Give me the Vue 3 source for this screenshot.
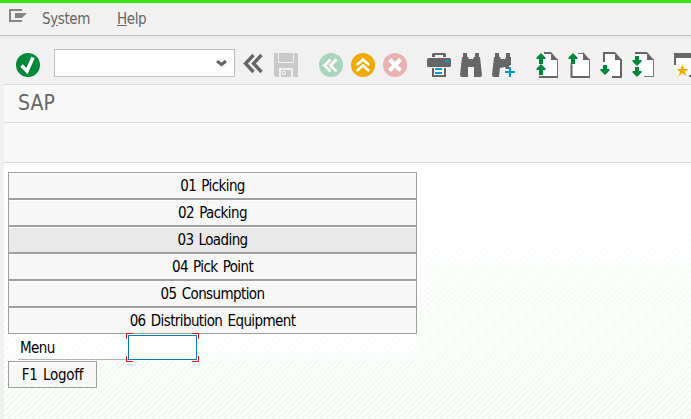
<script setup>
const items = ['01 Picking', '02 Packing', '03 Loading', '04 Pick Point', '05 Consumption', '06 Distribution Equipment']
const pages = [
  { id: 'first', direction: 'up', arrows: [1, 12], heavy: 'M8 1h7M3 25h19', light: 'M21.500 7v17' },
  { id: 'previous', direction: 'up', arrows: [1], heavy: 'M3.500 11v14H22', light: 'M10 1.500h5M21.500 7v17' },
  { id: 'next', direction: 'down', arrows: [13], heavy: 'M4 10V1h11M12 25h9V7', light: '' },
  { id: 'last', direction: 'down', arrows: [4, 15], heavy: 'M3 1h12', light: 'M12 24.500h9.500V7' }
]
const arrowPath = {
  up: 'M4.500 0 9 4.500V6H6.500v5h-4V6H0V4.500z',
  down: 'M2.500 0h4v4H9v1.500L4.500 10 0 5.500V4h2.500z'
}
</script>

<template>
  <div class="window">
    <nav class="menubar">
      <svg class="exit" width="18" height="14" viewBox="0 0 18 14">
        <path d="M12 2V1H1v11h11v-1" fill="none" stroke="#858585" stroke-width="2" />
        <path d="M6 4h12l-5 5H6z" fill="#858585" />
      </svg>
      <span class="system">S<u>y</u>stem</span>
      <span class="help"><u>H</u>elp</span>
    </nav>
    <div class="shell">
      <div class="toolbar">
        <svg class="icon check" viewBox="0 0 24 24">
          <circle cx="12" cy="12" r="12" fill="#00883a" />
          <path d="M5.500 12.500 11 18 17 4.500" fill="none" stroke="#fff" stroke-width="3.600" />
        </svg>
        <div class="combo">
          <svg width="11" height="7" viewBox="0 0 11 7"><path d="M1 1 5.500 4.500 10 1" fill="none" stroke="#666" stroke-width="3" /></svg>
        </div>
        <svg class="icon back" viewBox="0 0 24 24">
          <path d="M10.500 2 2.500 10.500l8 8.500M18.500 2l-8 8.500 8 8.500" fill="none" stroke="#666" stroke-width="3.300" />
        </svg>
        <svg class="icon save" viewBox="0 0 24 24">
          <path d="M0 0h4v10h16V0h4v24h-5v-9H5v9H2l-2-2z" fill="#c9c9c9" />
          <path d="M5 0h14v9H5zM7 17h10v7H7z" fill="#c9c9c9" />
          <path d="M11 18.500H8.500v3H11z" fill="none" stroke="#f1f1f1" />
        </svg>
        <svg class="icon prev" viewBox="0 0 24 24">
          <circle cx="12" cy="12" r="12" fill="#a9d5bc" />
          <path d="m11.500 6.500-6 6 6 6M17.500 6.500l-6 6 6 6" fill="none" stroke="#fff" stroke-width="2.800" />
        </svg>
        <svg class="icon" viewBox="0 0 24 24">
          <circle cx="12" cy="12" r="12" fill="#f0ab00" />
          <path d="m5.800 12 6.200-5.500 6.200 5.500M5.800 18l6.200-5.500 6.200 5.500" fill="none" stroke="#fff" stroke-width="2.600" />
        </svg>
        <svg class="icon" viewBox="0 0 24 24">
          <circle cx="12" cy="12" r="12" fill="#ebb1b1" />
          <path d="m6.500 6.500 11 11m0-11-11 11" stroke="#fff" stroke-width="4" />
        </svg>
        <svg class="icon print" viewBox="0 0 24 24">
          <path d="M5 4V1l1-1h12l1 1v3h-3V2H8v2z" fill="#666" />
          <rect y="5" width="24" height="9" rx="1.500" fill="#666" />
          <path d="M5 15h14v9H5z" fill="#666" /><path d="M7 14h10v8H7z" fill="#fff" />
          <path d="M18 7h4v2h-4zM8 15h7v2H8zM8 19h7v2H8z" fill="#009de0" />
        </svg>
        <svg class="icon" viewBox="0 0 24 24">
          <path d="M4 0h4v4h1.500v2h5V4H16V0h4v4h1l2 18-1 2h-7v-10H9v10H2l-1-2L3 4h1z" fill="#666" />
        </svg>
        <svg class="icon" viewBox="0 0 24 24">
          <path d="M4 0h4v4h1.500v2h5V4H15V0h4v4h1v8l-2 1v3h-3l-1-2-5 1-1 9H2l-1-2L3 4h1z" fill="#666" />
          <path d="M14 19h10M19 14v10" stroke="#009de0" stroke-width="2" />
        </svg>
        <svg v-for="page in pages" :key="page.id" class="icon page" :class="page.id" viewBox="0 0 24 26">
          <path d="M4 1h11l6.500 6.500V25H4z" fill="#fff" />
          <path :d="page.heavy" fill="none" stroke="#666" stroke-width="2" />
          <path :d="page.light" fill="none" stroke="#777" />
          <path d="M15 0v8h7z" fill="#666" />
          <path v-for="y in page.arrows" :key="y" :transform="`translate(.5 ${y})`" :d="arrowPath[page.direction]" fill="#00883a" stroke="#f6f6f6" stroke-width=".6" paint-order="stroke" />
        </svg>
        <svg class="icon session" viewBox="0 0 24 24">
          <path d="M0 0h24v24H15v-2h7V5H2v7H0z" fill="#666" /><path d="M2 5h20v17H2z" fill="#fafafa" />
          <path d="m8.500 11.500 1.700 4.500h4.300L11 18.700l1.500 4.300-4-2.700-4 2.700L6 18.700 2.500 16h4.300z" fill="#f0ab00" />
        </svg>
      </div>
      <header class="title">SAP</header>
      <div class="appbar"></div>
      <main class="canvas">
        <div class="menu">
          <button v-for="(item, i) in items" :key="item" :class="{ active: i === 2 }">{{ item }}</button>
        </div>
        <div class="field">
          <label>Menu</label>
          <div class="entry">
            <svg width="73" height="29" viewBox="0 0 73 29">
              <path d="M7 .5H.5V6M66 .5h6.500V6M7 28.500H.5V23M66 28.500h6.500V23" fill="none" stroke="#d91515" />
            </svg>
          </div>
        </div>
        <button class="logoff">F1 Logoff</button>
      </main>
    </div>
  </div>
</template>

<style>
body { margin: 0; overflow: hidden; }
</style>

<style scoped>
* { box-sizing: border-box; }
.window { width: 691px; height: 419px; overflow: hidden; display: flex; flex-direction: column; background: #f1f1f1; border-top: 3px solid #37e600; font: 15px/20px "DejaVu Sans Condensed", "DejaVu Sans", sans-serif; letter-spacing: -.6px; word-spacing: 1.5px; color: #000; }
.menubar { height: 33px; flex: none; display: flex; align-items: flex-start; padding: 6px 0 0 9px; border-bottom: 1px solid #c4c4c4; color: #666; letter-spacing: -.4px; }
.exit { flex: none; }
.system { margin-left: 15px; width: 75px; }
.shell { flex: 1; min-height: 0; display: flex; flex-direction: column; padding-left: 4px; border-top: 3px solid #eaeaea; }
.toolbar { height: 46px; flex: none; display: flex; align-items: flex-start; gap: 8px; padding: 14px 0 0 12px; border-bottom: 1px solid #d9d9d9; overflow: hidden; }
.icon { width: 24px; height: 24px; flex: none; overflow: visible; }
.combo { width: 181px; height: 28px; flex: none; margin: -4px 0 0 6px; border: 1px solid #bfbfbf; background: #fff; display: flex; justify-content: flex-end; padding: 10px 7px 0 0; }
.save { margin-left: -1px; }
.prev { margin-left: 13px; }
.print { margin-left: 12px; }
.page { height: 26px; margin-top: -1px; }
.first { margin-left: 13px; }
.session { margin-left: 10px; }
.title { height: 38px; flex: none; padding: 4px 0 0 14px; background: #f9f9f9; border-bottom: 1px solid #dedede; font-size: 21px; line-height: 29px; letter-spacing: .1px; color: #666; }
.appbar { height: 40px; flex: none; background: #f9f9f9; border-bottom: 1px solid #dadada; }
.canvas { flex: 1; min-height: 0; padding: 9px 0 0 4px; background: linear-gradient(#fff 5%, #ffffff00), repeating-linear-gradient(135deg, #effaed 0 2.120px, #fff 2.120px 4.243px); }
.menu { width: 409px; display: flex; flex-direction: column; }
button { height: 27px; flex: none; padding: 0; border: 1px solid #9f9f9f; border-radius: 0; background: #f7f7f7; box-shadow: inset 0 1px #fff; font: inherit; letter-spacing: inherit; word-spacing: inherit; color: #000; }
button.active { background: #e9e9e9; }
.field { width: 409px; height: 27px; display: flex; padding: 1px 0 0 10px; background: #ffffff80; }
label { width: 110px; height: 25px; padding: 3px 0 0 2px; border-bottom: 1px solid #b5b5b5; }
.entry { position: relative; width: 69px; height: 25px; border: 1px solid #087bb8; background: #fff; }
.entry svg { position: absolute; left: -3px; top: -3px; }
.logoff { width: 89px; display: block; letter-spacing: -.3px; }
</style>
